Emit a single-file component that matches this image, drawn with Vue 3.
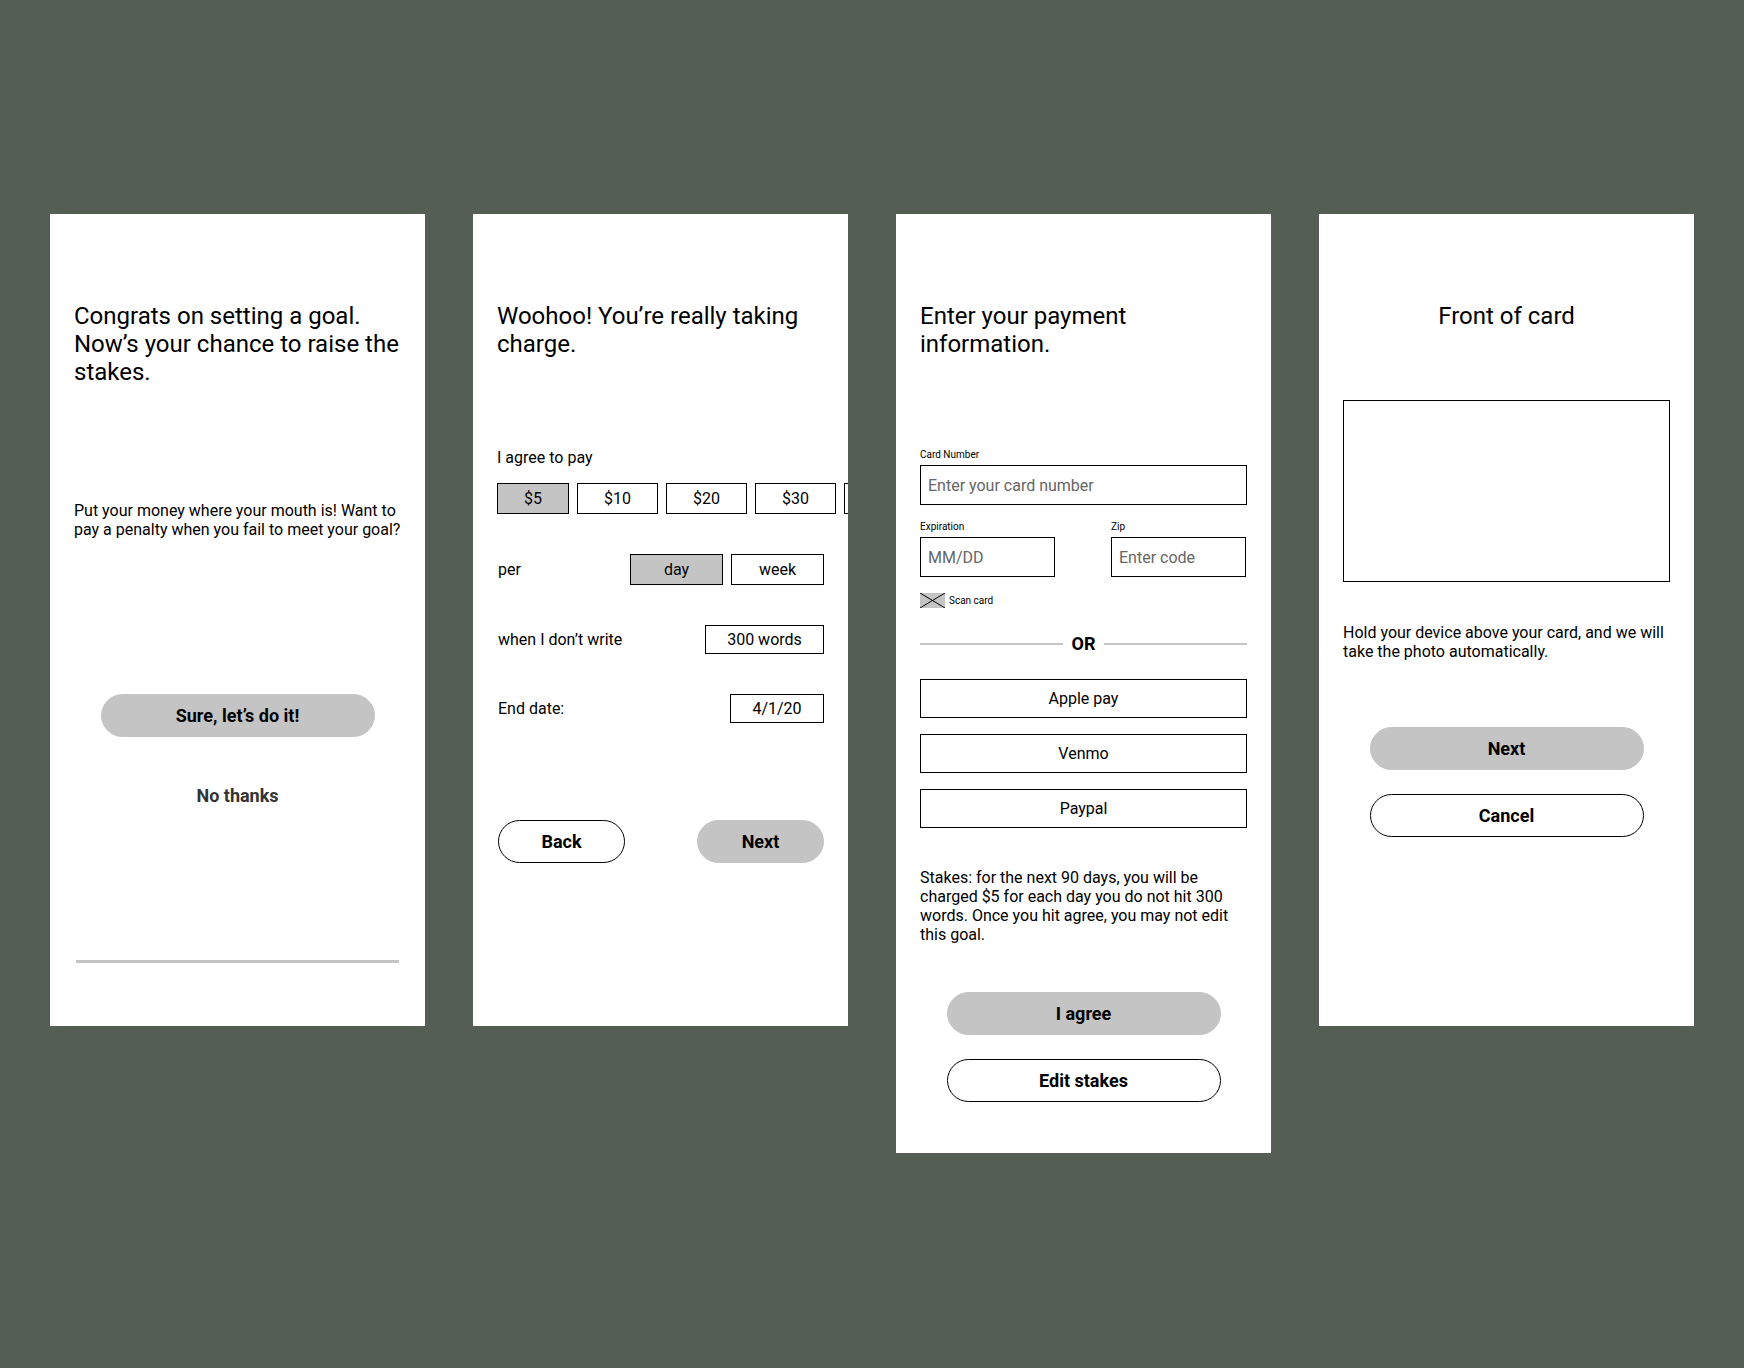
<script setup>
import { ref } from 'vue'

const amounts = ['$5', '$10', '$20', '$30', '']
const periods = ['day', 'week']
const wallets = ['Apple pay', 'Venmo', 'Paypal']

const amount = ref('$5')
const period = ref('day')
const words = ref('300 words')
const endDate = ref('4/1/20')
const cardNumber = ref('')
const expiration = ref('')
const zip = ref('')
</script>

<template>
  <main class="board">
    <section class="screen">
      <h1 class="title">Congrats on setting a goal. Now’s your chance to raise the stakes.</h1>
      <p class="copy pitch">Put your money where your mouth is! Want to pay a penalty when you fail to meet your goal?</p>
      <div class="actions choice">
        <button type="button" class="pill filled">Sure, let’s do it!</button>
        <button type="button" class="plain">No thanks</button>
      </div>
      <hr class="rule" />
    </section>

    <section class="screen">
      <h1 class="title">Woohoo! You’re really taking charge.</h1>
      <form class="stakes" @submit.prevent>
        <p id="amount-label" class="copy">I agree to pay</p>
        <div class="amounts" role="group" aria-labelledby="amount-label">
          <button
            v-for="item in amounts"
            :key="item"
            type="button"
            class="chip amount"
            :class="{ selected: item === amount }"
            :aria-pressed="item === amount"
            @click="amount = item"
          >{{ item }}</button>
        </div>
        <div class="row">
          <span id="period-label">per</span>
          <div class="periods" role="group" aria-labelledby="period-label">
            <button
              v-for="item in periods"
              :key="item"
              type="button"
              class="chip period"
              :class="{ selected: item === period }"
              :aria-pressed="item === period"
              @click="period = item"
            >{{ item }}</button>
          </div>
        </div>
        <div class="row">
          <label for="words">when I don’t write</label>
          <input id="words" v-model="words" class="value words" type="text" />
        </div>
        <div class="row">
          <label for="end-date">End date:</label>
          <input id="end-date" v-model="endDate" class="value date" type="text" />
        </div>
        <div class="row nav">
          <button type="button" class="pill">Back</button>
          <button type="submit" class="pill filled">Next</button>
        </div>
      </form>
    </section>

    <section class="screen">
      <h1 class="title">Enter your payment information.</h1>
      <form class="payment" @submit.prevent>
        <div class="field">
          <label for="card-number">Card Number</label>
          <input id="card-number" v-model="cardNumber" type="text" placeholder="Enter your card number" />
        </div>
        <div class="pair">
          <div class="field">
            <label for="expiration">Expiration</label>
            <input id="expiration" v-model="expiration" type="text" placeholder="MM/DD" />
          </div>
          <div class="field">
            <label for="zip">Zip</label>
            <input id="zip" v-model="zip" type="text" placeholder="Enter code" />
          </div>
        </div>
        <button type="button" class="scan">
          <svg width="25" height="15" viewBox="0 0 25 15" aria-hidden="true">
            <rect width="25" height="15" fill="#c4c4c4" />
            <path d="M0 0 25 15M0 15 25 0" stroke="#000" fill="none" />
          </svg>
          Scan card
        </button>
        <div class="or">OR</div>
        <div class="wallets">
          <button v-for="item in wallets" :key="item" type="button" class="wallet">{{ item }}</button>
        </div>
        <p class="copy terms">Stakes: for the next 90 days, you will be charged $5 for each day you do not hit 300 words. Once you hit agree, you may not edit this goal.</p>
        <div class="actions">
          <button type="submit" class="pill filled">I agree</button>
          <button type="button" class="pill">Edit stakes</button>
        </div>
      </form>
    </section>

    <section class="screen">
      <h1 class="title centered">Front of card</h1>
      <div class="viewfinder"></div>
      <p class="copy hint">Hold your device above your card, and we will take the photo automatically.</p>
      <div class="actions">
        <button type="button" class="pill filled">Next</button>
        <button type="button" class="pill">Cancel</button>
      </div>
    </section>
  </main>
</template>

<style>
body {
  margin: 0;
  background: #545e55;
}
</style>

<style scoped>
.board {
  display: grid;
  grid-template-columns: repeat(4, minmax(0, 1fr));
  align-items: start;
  gap: 48px;
  box-sizing: border-box;
  min-height: 100vh;
  padding: 214px 50px;
  background: #545e55;
  color: #000;
  font: 16px/19px Roboto, sans-serif;
}

.screen {
  box-sizing: border-box;
  min-height: 812px;
  padding: 88px 24px 51px;
  overflow: hidden;
  background: #fff;
}

.title {
  margin: 0;
  font-size: 24px;
  font-weight: 400;
  line-height: 28px;
}

.centered {
  text-align: center;
}

.copy {
  margin: 0;
}

button,
input {
  box-sizing: border-box;
  margin: 0;
  padding: 0;
  border: 1px solid #000;
  border-radius: 0;
  background: #fff;
  color: #000;
  font: inherit;
}

button {
  cursor: pointer;
}

.actions {
  display: flex;
  flex-direction: column;
  align-items: center;
  gap: 24px;
}

.pill {
  width: 274px;
  max-width: 100%;
  height: 43px;
  border-radius: 22px;
  font-size: 18px;
  font-weight: 700;
  line-height: 21px;
}

.pill.filled {
  border-color: #c4c4c4;
  background: #c4c4c4;
}

.plain {
  border: 0;
  background: none;
  color: #333;
  font-size: 18px;
  font-weight: 700;
  line-height: 21px;
}

/* Goal confirmation */
.pitch {
  margin-top: 115px;
}

.choice {
  gap: 48px;
  margin-top: 155px;
}

.rule {
  height: 3px;
  margin: 154px 2px 0;
  border: 0;
  background: #c4c4c4;
}

/* Stakes */
.stakes {
  margin-top: 90px;
}

.amounts {
  display: flex;
  gap: 8px;
  margin-top: 16px;
}

.chip {
  flex: none;
  height: 31px;
}

.selected {
  background: #c4c4c4;
}

.amount {
  width: 81px;
}

.amount:first-child {
  width: 72px;
}

.row {
  display: flex;
  align-items: center;
  justify-content: space-between;
  margin-top: 40px;
  padding-left: 1px;
}

.periods {
  display: flex;
  gap: 8px;
}

.period {
  width: 93px;
}

.value {
  height: 29px;
  text-align: center;
}

.words {
  width: 119px;
}

.date {
  width: 94px;
}

.nav {
  margin-top: 97px;
}

.nav .pill {
  width: 127px;
}

/* Payment */
.payment {
  margin-top: 91px;
}

.field {
  display: flex;
  flex-direction: column;
  gap: 4px;
}

.field label,
.scan {
  font-size: 10px;
  line-height: 12px;
}

.field input {
  width: 100%;
  height: 40px;
  padding: 0 7px;
}

.field input::placeholder {
  color: #666;
  opacity: 1;
}

.pair {
  display: grid;
  grid-template-columns: repeat(2, 135px);
  gap: 56px;
  margin-top: 16px;
}

.scan {
  display: flex;
  align-items: center;
  gap: 4px;
  margin-top: 16px;
  border: 0;
}

.scan svg {
  display: block;
}

.or {
  display: flex;
  align-items: center;
  gap: 9px;
  margin-top: 25px;
  font-size: 18px;
  font-weight: 700;
  line-height: 21px;
}

.or::before,
.or::after {
  content: "";
  flex: 1;
  height: 2px;
  background: #c4c4c4;
}

.wallets {
  display: flex;
  flex-direction: column;
  gap: 16px;
  margin-top: 25px;
}

.wallet {
  height: 39px;
}

.terms {
  margin: 40px 0 48px;
}

/* Card photo */
.viewfinder {
  box-sizing: border-box;
  height: 182px;
  margin-top: 70px;
  border: 1px solid #000;
}

.hint {
  margin: 41px 0 66px;
}
</style>
